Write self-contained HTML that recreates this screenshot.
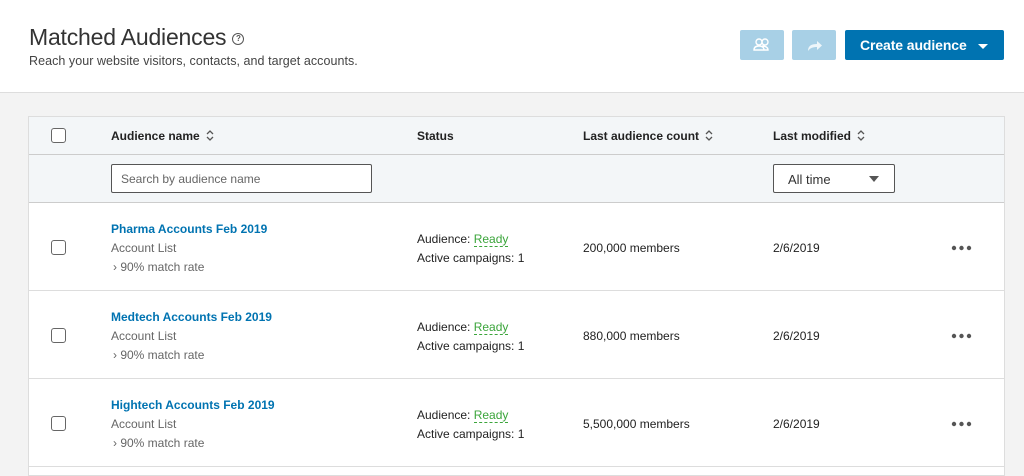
<!DOCTYPE html>
<html><head><style>
*{box-sizing:border-box;margin:0;padding:0}
body{width:1024px;height:467px;overflow:hidden;background:#f3f3f3;font-family:"Liberation Sans",sans-serif;color:#222;position:relative}
.hdr{position:absolute;left:0;top:0;width:1024px;height:93px;background:#fff;border-bottom:1px solid #ddd}
h1{position:absolute;left:29px;top:24px;font-size:23px;font-weight:normal;color:#333;letter-spacing:-0.2px}
.q{display:inline-block;width:12px;height:12px;border:1.5px solid #555;border-radius:50%;font-size:8px;text-align:center;line-height:9px;font-weight:bold;vertical-align:middle;margin-left:6px;color:#555}
.sub{position:absolute;left:29px;top:54px;font-size:12.5px;color:#444;letter-spacing:0.05px}
.b{position:absolute;top:30px;height:30px;border-radius:2px;background:#a8d0e6}
.cr{position:absolute;left:845px;top:30px;width:159px;height:30px;background:#0073b1;border-radius:2px;color:#fff;font-size:14px;font-weight:bold;line-height:30px;padding-left:15px;letter-spacing:-0.1px}
.cr:after{content:"";position:absolute;right:16px;top:14px;border:5px solid transparent;border-top-color:#fff}
.card{position:absolute;left:28px;top:116px;width:977px;height:360px;background:#fff;border:1px solid #ddd}
.th{position:absolute;left:0;top:0;width:975px;height:38px;background:#f3f6f8;border-bottom:1px solid #ccc}
.fr{position:absolute;left:0;top:38px;width:975px;height:48px;background:#f3f6f8;border-bottom:1px solid #ccc}
.t{position:absolute;font-size:12px}
.hd{font-weight:bold;color:#222;top:12px}
.cb{position:absolute;left:22px;width:15px;height:15px;border:1.5px solid #666;border-radius:3px;background:#fff}
.srt{display:inline-block;vertical-align:middle;margin-left:6px;margin-top:-3px}
.in{position:absolute;left:82px;top:9px;width:261px;height:29px;border:1px solid #555;border-radius:2px;background:#fff;font-size:12px;color:#666;padding:7px 9px}
.sel{position:absolute;left:744px;top:9px;width:122px;height:29px;border:1px solid #555;border-radius:2px;background:#fff;font-size:13px;color:#333;padding:7px 14px}
.sel:after{content:"";position:absolute;right:15px;top:11px;border:5px solid transparent;border-top:6px solid #555}
.row{position:absolute;left:0;width:975px;height:88px;border-bottom:1px solid #ddd}
.nm{left:82px;top:19px;color:#0073b1;font-weight:bold}
.g{color:#666}
.rdy{color:#3ba53b;border-bottom:1px dashed #3ba53b}
.dots{position:absolute;left:922px;top:42px}
</style></head><body>
<div class="hdr">
<h1>Matched Audiences<span class="q">?</span></h1>
<div class="sub">Reach your website visitors, contacts, and target accounts.</div>
<div class="b" style="left:740px;width:44px"><svg width="44" height="30"><g fill="none" stroke="#fff" stroke-width="1.4"><circle cx="19" cy="12" r="3"/><circle cx="25" cy="12" r="3"/><path d="M14 20c0-3 2-4 5-4s5 1 5 4zM22 16c3 0 6 1 6 4h-4"/></g></svg></div>
<div class="b" style="left:792px;width:44px"><svg width="44" height="30"><path d="M16 21c0-5 3-7 9-7v-3l5 4.5-5 4.5v-3c-4 0-7 1-9 4z" fill="#fff" opacity=".8"/></svg></div>
<div class="cr">Create audience</div>
</div>
<div class="card">
<div class="th">
<div class="cb" style="top:11px"></div>
<div class="t hd" style="left:82px">Audience name<svg class="srt" width="8" height="13"><path d="M1 5l3-3 3 3M1 8l3 3 3-3" fill="none" stroke="#555" stroke-width="1.3"/></svg></div>
<div class="t hd" style="left:388px">Status</div>
<div class="t hd" style="left:554px">Last audience count<svg class="srt" width="8" height="13"><path d="M1 5l3-3 3 3M1 8l3 3 3-3" fill="none" stroke="#555" stroke-width="1.3"/></svg></div>
<div class="t hd" style="left:744px">Last modified<svg class="srt" width="8" height="13"><path d="M1 5l3-3 3 3M1 8l3 3 3-3" fill="none" stroke="#555" stroke-width="1.3"/></svg></div>
</div>
<div class="fr"><div class="in">Search by audience name</div><div class="sel">All time</div></div>
<div class="row" style="top:86px">
<div class="cb" style="top:37px"></div>
<div class="t nm">Pharma Accounts Feb 2019</div>
<div class="t g" style="left:82px;top:38px">Account List</div>
<div class="t g" style="left:84px;top:57px">› 90% match rate</div>
<div class="t" style="left:388px;top:29px">Audience: <span class="rdy">Ready</span></div>
<div class="t" style="left:388px;top:48px">Active campaigns: 1</div>
<div class="t" style="left:554px;top:38px">200,000 members</div>
<div class="t" style="left:744px;top:38px">2/6/2019</div>
<svg class="dots" width="22" height="6"><circle cx="3" cy="3" r="2.2" fill="#555"/><circle cx="10.5" cy="3" r="2.2" fill="#555"/><circle cx="18" cy="3" r="2.2" fill="#555"/></svg>
</div>
<div class="row" style="top:174px">
<div class="cb" style="top:37px"></div>
<div class="t nm">Medtech Accounts Feb 2019</div>
<div class="t g" style="left:82px;top:38px">Account List</div>
<div class="t g" style="left:84px;top:57px">› 90% match rate</div>
<div class="t" style="left:388px;top:29px">Audience: <span class="rdy">Ready</span></div>
<div class="t" style="left:388px;top:48px">Active campaigns: 1</div>
<div class="t" style="left:554px;top:38px">880,000 members</div>
<div class="t" style="left:744px;top:38px">2/6/2019</div>
<svg class="dots" width="22" height="6"><circle cx="3" cy="3" r="2.2" fill="#555"/><circle cx="10.5" cy="3" r="2.2" fill="#555"/><circle cx="18" cy="3" r="2.2" fill="#555"/></svg>
</div>
<div class="row" style="top:262px">
<div class="cb" style="top:37px"></div>
<div class="t nm">Hightech Accounts Feb 2019</div>
<div class="t g" style="left:82px;top:38px">Account List</div>
<div class="t g" style="left:84px;top:57px">› 90% match rate</div>
<div class="t" style="left:388px;top:29px">Audience: <span class="rdy">Ready</span></div>
<div class="t" style="left:388px;top:48px">Active campaigns: 1</div>
<div class="t" style="left:554px;top:38px">5,500,000 members</div>
<div class="t" style="left:744px;top:38px">2/6/2019</div>
<svg class="dots" width="22" height="6"><circle cx="3" cy="3" r="2.2" fill="#555"/><circle cx="10.5" cy="3" r="2.2" fill="#555"/><circle cx="18" cy="3" r="2.2" fill="#555"/></svg>
</div>
</div>
</body></html>
